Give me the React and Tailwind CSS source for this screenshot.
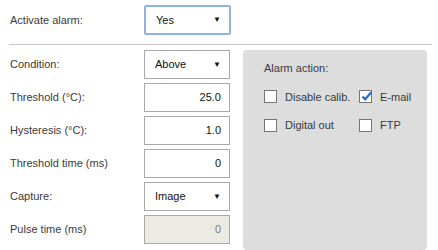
import React from "react";

function Select({ value, focused }) {
  return (
    <div
      className={
        "flex items-center justify-between bg-white pl-[10px] pr-[8px] text-[11px] text-[#111] " +
        (focused
          ? "w-[87px] h-[30px] border-2 border-[#8fb1e6] rounded-[2px]"
          : "w-[86px] h-[29px] border border-[#a9a9a9]")
      }
    >
      <span>{value}</span>
      <span className="text-[8px] leading-none text-[#111]">▼</span>
    </div>
  );
}

function Input({ value, disabled }) {
  return (
    <div
      className={
        "flex items-center justify-end w-[86px] h-[29px] border border-[#a9a9a9] pr-[8px] text-[11px] " +
        (disabled ? "bg-[#ebebe4] text-[#7a7a7a]" : "bg-white text-[#111]")
      }
    >
      {value}
    </div>
  );
}

function Row({ label, children }) {
  return (
    <div className="flex items-center justify-between">
      <span className="pl-[1px]">{label}</span>
      {children}
    </div>
  );
}

function Check({ label, checked }) {
  return (
    <div className="flex items-center gap-[8px]">
      <div className="relative w-[13px] h-[13px] bg-white border border-[#767676]">
        {checked && (
          <svg
            viewBox="0 0 13 13"
            className="absolute left-[0px] top-[-1px] w-[13px] h-[13px]"
          >
            <path
              d="M2.5 6.5 L5.2 9.3 L11.2 2.2"
              fill="none"
              stroke="#1e6fd0"
              strokeWidth="2.2"
            />
          </svg>
        )}
      </div>
      <span>{label}</span>
    </div>
  );
}

export default function App() {
  return (
    <div className="w-[438px] h-[250px] bg-white font-['Liberation_Sans',Arial,sans-serif] text-[11px] text-[#3a3a3a] overflow-hidden">
      <div className="flex items-center pl-[9px] pt-[5px]">
        <span className="w-[135px] pl-[1px]">Activate alarm:</span>
        <Select value="Yes" focused />
      </div>
      <div className="ml-[9px] mt-[9px] w-[423px] h-px bg-[#c8c8c8]" />
      <div className="flex pl-[9px] pt-[5px]">
        <div className="w-[221px] flex flex-col gap-[4px]">
          <Row label="Condition:">
            <Select value="Above" />
          </Row>
          <Row label="Threshold (°C):">
            <Input value="25.0" />
          </Row>
          <Row label="Hysteresis (°C):">
            <Input value="1.0" />
          </Row>
          <Row label="Threshold time (ms)">
            <Input value="0" />
          </Row>
          <Row label="Capture:">
            <Select value="Image" />
          </Row>
          <Row label="Pulse time (ms)">
            <Input value="0" disabled />
          </Row>
        </div>
        <div className="ml-[13px] w-[184px] h-[200px] rounded-[4px] bg-[#dddddd] pl-[21px] pt-[10px]">
          <div>Alarm action:</div>
          <div className="mt-[12px] grid grid-cols-[95px_auto] gap-y-[12px]">
            <Check label="Disable calib." />
            <Check label="E-mail" checked />
            <Check label="Digital out" />
            <Check label="FTP" />
          </div>
        </div>
      </div>
    </div>
  );
}
